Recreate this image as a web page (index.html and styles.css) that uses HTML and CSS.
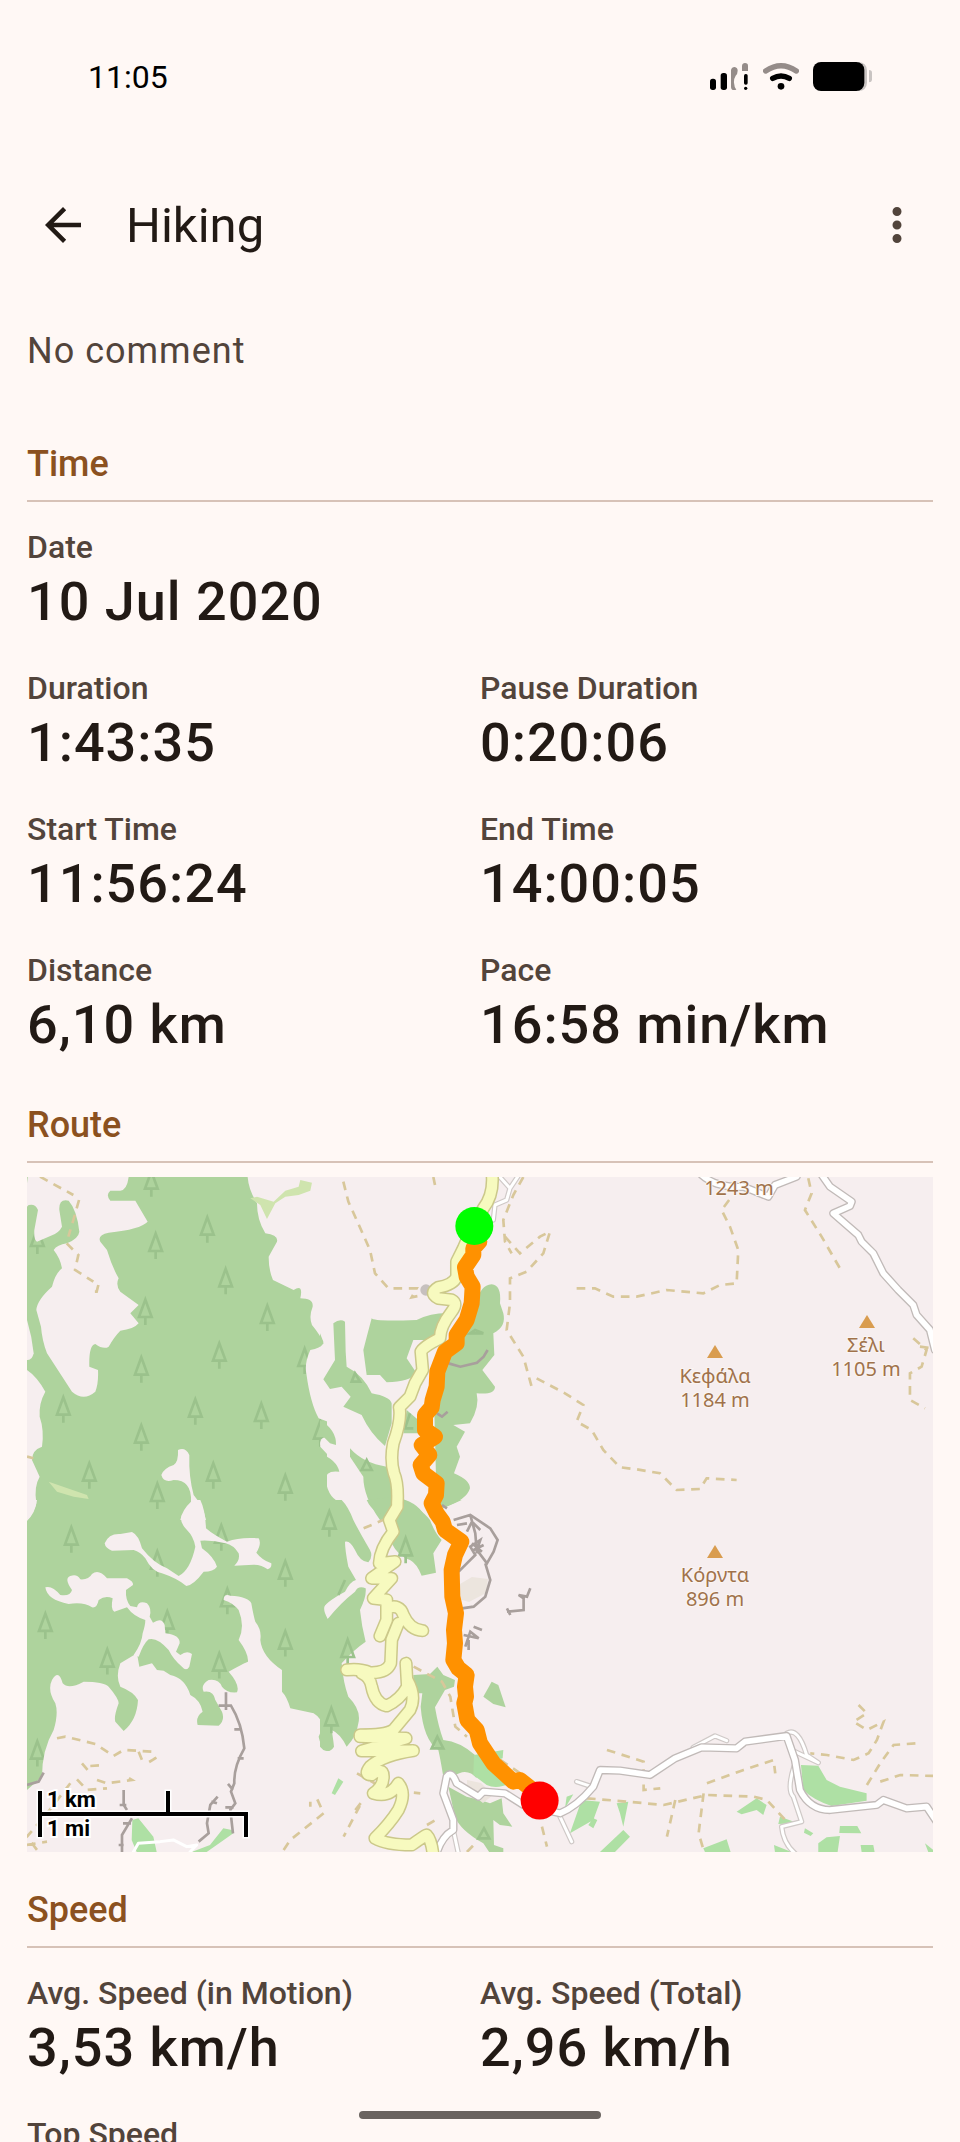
FILE: index.html
```html
<!DOCTYPE html>
<html lang="en">
<head>
    <meta charset="UTF-8">
    <meta name="viewport" content="width=device-width, initial-scale=1.0">
    <title>Hiking</title>
    <link rel="stylesheet" href="styles.css">
</head>
<body>

<div class="status-bar">
    <span>11:05</span>
    <div class="status-icons">
        <svg width="39" height="29" viewBox="213 96 117 87">
            <rect x="213" y="146" width="18" height="34" rx="8"/>
            <rect x="245" y="129" width="19" height="51" rx="8"/>
            <path class="dim" d="M276 120Q278 111 287 111Q296 113 296 122Q296 131 290 137Q284 147 285 158Q286 172 292 179Q276 184 276 170z"/>
            <path class="dim" d="M309 123V107Q310 99 318 99Q327 99 327 107V123z"/>
            <rect x="315" y="132" width="11" height="32" rx="5"/>
            <circle cx="320" cy="175" r="5"/>
        </svg>
        <svg width="36" height="29" viewBox="369 96 108 87">
            <path class="dim-line" d="M377 123Q423 91 469 123"/>
            <path class="line" d="M398 145Q423 131 448 145"/>
            <circle cx="423" cy="169" r="10"/>
        </svg>
        <svg width="59" height="29" viewBox="519 96 177 87">
            <path class="faint" d="M655 96Q681 98 681 122V158Q680 182 655 183z"/>
            <rect x="519" y="96" width="154" height="87" rx="24"/>
            <path class="faint" d="M687 120Q696 121 696 128V150Q695 157 687 157z"/>
        </svg>
    </div>
</div>

<header class="app-bar">
    <button class="icon-button" type="button" aria-label="Back">
        <svg class="back" width="54" height="54" viewBox="0 0 24 24"><path d="M20 11H7.83l5.59-5.59L12 4l-8 8 8 8 1.41-1.41L7.83 13H20z"/></svg>
    </button>
    <h1>Hiking</h1>
    <button class="icon-button" type="button" aria-label="More options">
        <svg width="54" height="54" viewBox="0 0 24 24"><path d="M12 8a2 2 0 1 0 0-4 2 2 0 0 0 0 4zm0 2a2 2 0 1 0 0 4 2 2 0 0 0 0-4zm0 6a2 2 0 1 0 0 4 2 2 0 0 0 0-4z"/></svg>
    </button>
</header>

<main>
    <p class="comment">No comment</p>

    <section>
        <h2>Time</h2>
        <dl class="stats">
            <div class="wide"><dt>Date</dt><dd>10 Jul 2020</dd></div>
            <div><dt>Duration</dt><dd>1:43:35</dd></div>
            <div><dt>Pause Duration</dt><dd>0:20:06</dd></div>
            <div><dt>Start Time</dt><dd>11:56:24</dd></div>
            <div><dt>End Time</dt><dd>14:00:05</dd></div>
            <div><dt>Distance</dt><dd>6,10 km</dd></div>
            <div><dt>Pace</dt><dd>16:58 min/km</dd></div>
        </dl>
    </section>

    <section>
        <h2>Route</h2>
        <svg class="map" viewBox="0 0 906 675">
            <defs>
                <path id="tree" d="M0 4L-19 56H19zM0 56V80"/>
                <path id="peak" d="M0 0L8 13H-8z"/>
                <path id="main-road" d="M515 0Q525 70 490 115L445 200L430 235L410 275V320Q400 345 355 352Q325 370 355 385L395 390Q415 400 395 425Q360 470 360 505Q310 530 303 545L308 600L285 640L270 680L238 712Q245 750 220 820Q210 870 222 910Q235 940 232 1000V1010L208 1050L220 1085Q180 1135 178 1180L225 1175L155 1225L215 1225L160 1285L200 1290V1350L180 1398M200 1315Q240 1300 250 1335Q270 1380 308 1382M235 1360L215 1410L212 1480Q200 1510 150 1508Q120 1495 80 1500M125 1510Q150 1520 155 1550Q165 1600 200 1608Q240 1590 262 1550L258 1480M262 1530Q290 1580 270 1620L220 1680Q200 1695 120 1695M120 1700L258 1705L125 1743L280 1742Q190 1755 150 1790Q130 1815 155 1815Q190 1790 190 1820Q190 1850 160 1870Q210 1885 235 1840Q260 1870 235 1920Q210 1960 165 2005Q200 2025 275 2025Q310 2000 320 1995Q335 2010 340 2060"/>
                <path id="minor-road" d="M350 1060Q365 1010 400 990V960L370 880L380 830Q395 810 410 850L475 890L490 875L555 880L610 915L720 940Q770 920 820 860L840 810L900 812L990 825L1065 775L1145 742L1250 745L1275 725L1400 708L1425 780L1440 870Q1470 930 1530 930L1670 915L1690 900L1760 925L1820 920L1850 965"/>
                <path id="hill-road" d="M595 0L630 50L695 95L690 108L640 130L715 195L725 215L760 250L790 310L835 360L880 405L890 435L930 480L945 540M245 15Q290 55 370 50L445 80L465 45L530 20"/>
                <path id="lanes" d="M1120 742L1185 708L1220 722M1400 700Q1435 680 1460 765L1495 788L1425 755M1422 800Q1400 870 1420 890L1445 965L1385 980Q1390 1030 1425 1060M720 950L755 1025M400 990L415 1060M770 845L815 860"/>
            </defs>

            <rect class="land" width="906" height="675"/>

            <!-- western forest -->
            <rect class="wood" width="300" height="675"/>
            <g class="trees" transform="translate(0 -7) scale(.3333)">
                <use href="#tree" x="373" y="0"/><use href="#tree" x="541" y="138"/><use href="#tree" x="386" y="187"/>
                <use href="#tree" x="596" y="293"/><use href="#tree" x="355" y="385"/><use href="#tree" x="721" y="403"/>
                <use href="#tree" x="577" y="516"/><use href="#tree" x="343" y="558"/><use href="#tree" x="833" y="532"/>
                <use href="#tree" x="109" y="678"/><use href="#tree" x="505" y="684"/><use href="#tree" x="703" y="697"/>
                <use href="#tree" x="343" y="762"/><use href="#tree" x="187" y="876"/><use href="#tree" x="559" y="876"/>
                <use href="#tree" x="391" y="937"/><use href="#tree" x="775" y="912"/><use href="#tree" x="880" y="750"/>
                <use href="#tree" x="31" y="172"/><use href="#tree" x="133" y="1068"/><use href="#tree" x="583" y="1062"/>
                <use href="#tree" x="775" y="1170"/><use href="#tree" x="391" y="1140"/><use href="#tree" x="55" y="1327"/>
                <use href="#tree" x="601" y="1253"/><use href="#tree" x="421" y="1320"/><use href="#tree" x="775" y="1380"/>
                <use href="#tree" x="241" y="1434"/><use href="#tree" x="577" y="1446"/><use href="#tree" x="31" y="1710"/>
            </g>
            <g class="land" transform="translate(0 -7) scale(.3333)">
                <path d="M5 0H305V21Q300 60 280 62H250Q235 75 250 92H325L362 155Q340 178 245 188Q210 195 220 215L240 240Q255 290 275 325Q265 345 280 365L335 405L310 430L335 460Q320 478 280 482Q262 500 245 530Q230 540 205 522Q185 525 187 590L213 600Q215 640 205 665Q170 695 135 665L60 550Q45 510 42 470L28 420Q30 390 75 350Q85 310 105 295Q100 265 80 240Q90 225 120 220Q155 205 157 185Q150 120 125 92Q95 85 97 120L105 170Q95 190 70 198L30 215Q20 210 22 180L33 120Q25 100 5 105L0 110V40z"/>
                <path d="M0 450Q15 500 20 550Q15 572 0 570z"/>
                <path d="M0 600Q30 620 55 665Q35 700 38 740Q52 780 45 830Q15 840 15 870L38 920Q20 950 28 1000Q20 1030 0 1052z"/>
                <path d="M662 0V21Q665 60 690 100Q690 150 715 190Q755 195 750 215L725 260Q725 300 738 330L800 360Q830 340 820 385Q860 385 857 410Q845 440 855 465Q880 495 890 520Q880 535 850 540Q832 580 838 610Q850 700 875 745L903 755V0z"/>
                <path d="M453 840Q475 830 487 855Q485 920 500 975Q530 1010 537 1050L460 1050Q465 1020 492 995Q495 930 440 930Q410 940 403 915Q410 895 440 885Q455 875 453 840z"/>
                <path d="M903 800Q875 800 880 830L903 855z"/>
            </g>
            <g class="land" transform="translate(0 323) scale(.3333)">
                <path d="M0 870L45 830Q45 750 80 690Q95 640 85 610Q60 570 75 540Q95 505 107 550Q125 570 170 545Q230 545 245 560Q275 595 275 610Q260 650 265 665L290 693Q330 660 333 600Q320 575 280 560Q265 530 280 490L330 460L337 500L375 490L390 510L410 512L430 525Q475 535 490 585Q520 600 527 635Q505 650 512 675L575 677Q595 660 585 635L565 600Q560 570 530 575Q520 555 545 540Q575 535 585 560Q600 580 630 577Q640 555 605 515Q640 495 663 485Q665 460 635 420Q655 380 635 330Q620 310 590 300Q590 280 610 287Q665 290 673 310Q680 350 685 365Q705 390 700 420Q705 470 765 510V575Q780 590 790 625L860 640Q900 665 875 710Q880 740 903 755V1060H0z"/>
                <path d="M55 262Q75 255 100 285Q130 290 135 270Q110 235 130 228Q150 220 160 238Q185 240 195 222Q215 205 240 235H300Q320 245 318 255L297 270Q295 300 310 318L330 322Q335 300 360 310Q375 325 368 350L378 368Q405 350 413 375L415 400Q460 405 458 430L447 455L460 465Q480 450 495 462L487 500Q478 515 465 500Q440 480 425 450Q390 410 365 418Q350 430 335 470L320 465Q345 430 347 400Q355 375 355 360Q320 350 300 322L262 335Q250 330 257 295Q235 285 215 300Q210 325 195 322Q170 305 125 312Q60 300 55 262z"/>
                <path d="M233 130Q245 100 280 102L315 96Q335 105 345 145Q380 190 420 205L455 228Q490 210 505 140Q500 110 480 90Q455 65 465 45Q490 25 495 0H520Q535 30 537 85Q560 105 600 125Q640 110 695 115Q705 130 688 158Q705 180 733 190Q735 205 722 208Q700 190 665 195L622 197Q640 180 635 160Q620 135 595 130Q560 120 520 122L525 145Q560 170 570 200Q560 215 530 215Q500 255 478 258Q450 235 405 220Q375 215 355 175Q340 155 320 150L255 152Q235 145 233 130z"/>
                <path d="M0 0H30Q25 40 0 62zM903 305Q880 320 903 358z"/>
            </g>

            <!-- woods in the valley -->
            <g class="wood" transform="translate(293 -7) scale(.3333)">
                <path d="M40 460Q60 445 75 455L77 545L80 590Q130 615 155 670Q210 680 215 700V760L195 828Q150 790 125 735L70 710L92 680L65 650L30 657L10 628L45 570z"/>
                <path d="M155 445Q160 455 290 450Q340 425 400 430L340 510H280L260 565L290 610Q270 635 200 637L180 615H140L130 540L143 490z"/>
                <path d="M470 400Q480 345 515 343Q545 345 540 400L550 430Q560 470 520 490L523 555L487 600L525 650Q525 675 470 670Q480 710 450 760L400 765L435 785L410 830L420 860L402 910Q450 930 450 955Q440 990 375 1010L350 1000L340 600L440 490z"/>
                <path d="M260 720L295 750V790H250z"/>
                <path d="M90 835Q130 880 200 890L240 985Q300 1000 320 1050H180Q130 980 130 920L90 860z"/>
                <path d="M0 750Q50 780 48 825L30 820L0 790z"/>
                <path d="M0 850Q50 870 58 905Q15 900 17 930Q25 990 70 1000L80 1050H0z"/>
                <path d="M0 490L10 515L0 530z"/>
            </g>
            <g class="wood" transform="translate(293 323) scale(.3333)">
                <path d="M0 0H65Q85 20 100 60Q115 90 150 150Q160 170 145 187Q120 185 105 150Q90 120 75 125Q75 150 85 200L108 240Q90 245 75 275Q10 310 7 330Q10 360 25 355Q60 310 105 275Q115 255 137 265Q140 290 120 330Q125 380 137 425Q100 450 65 490Q70 550 85 590Q125 630 115 670Q110 710 80 740Q60 700 35 690Q40 720 42 740Q30 760 10 750L0 740z"/>
                <path d="M140 0Q160 45 215 50L215 130Q235 170 270 180Q290 190 305 227L348 218L340 160L365 120Q345 100 330 60Q300 20 225 -10z"/>
                <path d="M350 0H425L370 25z"/>
                <path d="M280 525L330 522L352 500L370 525L405 540L402 560L375 570L345 622Q355 680 370 720Q420 725 465 765L470 835Q440 800 400 830H370Q360 770 355 750Q310 720 302 620L307 580H280z"/>
                <path d="M490 590L515 545L535 555L557 622L520 612z"/>
                <path d="M385 860L440 890L480 900L510 910L545 895L550 940L577 980L540 975L520 960L522 1035L550 1045V1060H510L490 1030Q420 990 405 950z"/>
            </g>
            <g class="orchard" transform="translate(293 323) scale(.3333)">
                <path d="M462 765L550 750L548 775L530 780L570 850Q530 870 500 855L460 825z"/>
                <path d="M785 900L840 905L820 960L750 1000zM820 955L832 960L820 985L805 975zM740 890L760 883L735 925zM35 880L55 835L70 845L45 885z"/>
                <path d="M840 1056L910 990L930 1010L885 1056zM890 910L925 905L920 930L910 980L900 940z"/>
                <path d="M1443 795L1495 797L1520 840L1560 860L1640 880V902L1535 918Q1480 900 1450 870zM1250 935L1310 895L1340 915L1330 945L1310 930L1265 943z"/>
                <path d="M1150 1045L1220 1018L1232 1056H1155zM1560 978H1612L1624 1000L1558 999zM1520 1012L1560 1008L1553 1056H1495V1030zM1622 1035H1660L1664 1056H1625zM1380 950L1435 970L1375 972zM1362 1035L1415 1056H1365zM1455 985L1480 1000L1472 1008L1452 998zM1815 1030L1840 1050V1056H1825z"/>
                <path d="M-563 960L-545 955L-500 1010L-490 1056H-550L-565 1020zM-385 1056L-330 1035L-290 985L-265 990L-260 1000L-310 1035L-340 1056z"/>
            </g>
            <g class="trees" transform="translate(293 323) scale(.3333)">
                <use href="#tree" x="28" y="30"/><use href="#tree" x="257" y="110"/><use href="#tree" x="83" y="415"/>
                <use href="#tree" x="34" y="620"/><path d="M352 710L335 745H370zM492 985L475 1015H508zM75 240L55 285"/>
                <path d="M105 -380L95 -355H120zM465 -510L450 -500H490zM140 -120L125 -90H155zM270 -260L255 -215H280"/>
            </g>
            <g class="scrub" transform="translate(0 -7) scale(.3333)">
                <path d="M670 85L690 80L740 95L775 62L815 50L820 30L855 38L850 62L815 75L775 80L745 100L720 147L700 105zM65 935L180 975L185 987L140 980L90 965z"/>
            </g>
            <path class="quarry" d="M433 407l12 -7 16 2 -2 14 -17 9 -10 -3zM440 603l14 3 12 12 -10 8 -16 -12z"/>

            <!-- footpaths -->
            <g class="trail" transform="translate(293 -7) scale(.3333)">
                <path d="M70 35L85 95L110 150L150 240L165 310L205 355L290 355L275 382L310 375M340 21L345 45"/>
                <path d="M610 21L580 75L550 150L555 215L575 250M555 200L600 250L660 200L690 185L670 250L620 305L570 325V400L560 480L610 560L635 650M650 625L735 670L790 705L770 755L815 780L850 840L900 892L950 898L1020 910L1070 960L1140 957L1160 925L1250 930M770 355H825L880 380L950 380L1040 360L1150 370L1200 345L1250 340L1255 240L1230 170L1205 120L1235 80"/>
                <path d="M1465 25L1475 70L1455 120L1505 200L1560 295M1780 505L1820 540L1805 590L1770 610V690L1815 715M1800 530L1840 535"/>
                <path d="M-840 20L-740 75M-723 90L-740 150L-755 200M-760 220L-725 255L-735 300L-680 335M-665 345L-670 365L-695 365M-879 860L-860 865"/>
            </g>
            <g class="trail" transform="translate(0 323) scale(.3333)">
                <path d="M90 715L115 710L205 732L260 768L290 750L375 755L385 775L360 790M335 755L345 780M165 790L190 820M190 798L235 795M210 840L240 850L315 840L290 825M150 838L180 870L240 865M130 850L60 940L0 1010L30 1050M770 1050L790 1020L890 940L865 885M850 920V905M0 1035L60 1025"/>
                <path d="M985 930L1005 905L950 1010M990 820L1080 870L1180 880M1010 85L1080 55M1160 500L1245 545L1270 590L1285 680L1320 710M1420 780L1480 820M1545 980L1560 1040M1200 975L1235 955M1320 1056L1345 1030"/>
                <path d="M1680 895L1800 905L1910 915L2040 885L2180 890L2220 900L2275 960M1740 750L1850 785V870L1900 865M1945 900L1920 1010M2030 880L2015 1000L2030 1050M2040 850L2150 810L2240 780L2245 820"/>
                <path d="M2495 615L2520 640L2480 665L2520 690L2570 665L2550 720L2525 760L2480 780L2400 765L2350 760M2520 855L2560 790L2600 735L2670 730M2560 845L2620 825L2720 828"/>
            </g>

            <!-- cliffs and rocks -->
            <g class="cliff" transform="translate(0 323) scale(.3333)">
                <path d="M597 577V630M575 617H612Q645 670 652 745Q620 800 622 850L612 875L625 910L610 930L618 1000M622 688H645M632 775H650M603 852L618 870M595 922H620"/>
                <path d="M290 870V915L300 930M278 915H298M315 955L300 980L285 1005V1056M288 970H312M275 1035H290M572 890L550 915L540 970L545 1000L515 1025M553 905L570 910M0 855L35 845L50 818"/>
                <path d="M1280 60L1330 45L1390 85L1412 120L1400 155L1380 190L1350 150L1360 120L1330 140L1345 165L1310 200L1295 215M1330 45L1345 100L1350 160M1290 75L1320 70M1335 130L1365 155M1340 150L1370 135M1320 95L1335 65L1360 90M1375 190L1390 240L1375 290L1340 320L1305 325M1440 335L1490 330V295L1475 285L1500 290L1510 265M1440 325L1450 345M1315 440L1330 395L1355 415L1310 405M1340 380L1365 390M1325 450V420"/>
                <path d="M1265 -410L1300 -400L1350 -412L1370 -430L1382 -450M1230 -260L1245 -250L1262 -265M1245 15L1260 25"/>
            </g>

            <!-- roads -->
            <g transform="translate(293 323) scale(.3333)">
                <use class="lane-casing" href="#lanes"/><use class="lane-fill" href="#lanes"/>
                <use class="minor-casing" href="#minor-road"/><use class="minor-fill" href="#minor-road"/>
                <path class="lane-fill" d="M-560 1056L-545 1030L-480 1025L-440 1020L-400 1040L-370 1035L-390 1056"/>
            </g>
            <g transform="translate(593 -7) scale(.3333)">
                <use class="minor-casing" href="#hill-road"/><use class="minor-fill" href="#hill-road"/>
            </g>
            <g transform="translate(293 -7) scale(.3333)">
                <path class="lane-casing" d="M530 10L570 55L600 10M570 55L560 90L525 105L520 150"/>
                <path class="lane-fill" d="M530 10L570 55L600 10M570 55L560 90L525 105L520 150"/>
                <circle class="stop" cx="318" cy="360" r="17"/>
                <use class="main-casing" href="#main-road"/><use class="main-fill" href="#main-road"/>
            </g>

            <!-- recorded track -->
            <g transform="translate(293 -7) scale(.3333)">
                <path class="track" d="M478 215L460 235V255L435 292L440 320L458 350L455 400L440 450L410 495V520L375 545L352 605L350 650L338 690L335 712L315 735V780L345 800L305 825L328 855L302 885L310 910L350 940L348 975L335 1000L350 1030L368 1055L375 1080L424 1115L405 1155L395 1200L397 1280L408 1330L402 1380L405 1420L400 1470L415 1495L440 1515L435 1550L438 1580L433 1600L442 1650L470 1680L480 1720L520 1780L580 1835L600 1830L650 1870"/>
                <circle class="start" cx="463" cy="168" r="57"/>
                <circle class="end" cx="659" cy="1892" r="57"/>
            </g>

            <g class="peaks">
                <use href="#peak" x="688" y="168"/>
                <use href="#peak" x="840" y="138"/>
                <use href="#peak" x="688" y="368"/>
                <text x="712" y="18">1243 m</text>
                <text x="688" y="206">Κεφάλα</text>
                <text x="688" y="230">1184 m</text>
                <text x="839" y="175">Σέλι</text>
                <text x="839" y="199">1105 m</text>
                <text x="688" y="405">Κόρντα</text>
                <text x="688" y="429">896 m</text>
            </g>

            <g class="scale">
                <path class="halo" d="M13 616V658M13 637H219V658M141 616V637"/>
                <path d="M13 616V658M13 637H219V658M141 616V637"/>
                <text x="20" y="630">1 km</text>
                <text x="20" y="659">1 mi</text>
            </g>
        </svg>
    </section>

    <section>
        <h2>Speed</h2>
        <dl class="stats">
            <div><dt>Avg. Speed (in Motion)</dt><dd>3,53 km/h</dd></div>
            <div><dt>Avg. Speed (Total)</dt><dd>2,96 km/h</dd></div>
            <div class="wide"><dt>Top Speed</dt></div>
        </dl>
    </section>
</main>

<div class="home-indicator"></div>

</body>
</html>
```
FILE: styles.css
```css
* { box-sizing: border-box; }
body {
    margin: 0;
    height: 100vh;
    overflow: hidden;
    background: #fff8f5;
    color: #221a15;
    font-family: Roboto, "Noto Sans", sans-serif;
}
h1, h2, p, dl, dd { margin: 0; }
svg { display: block; }

.status-bar {
    display: flex;
    align-items: center;
    justify-content: space-between;
    height: 153px;
    padding: 0 88px;
    color: #000;
    font-size: 32px;
}
.status-icons { display: flex; gap: 14px; }
.dim { fill: #958c89; }
.dim-line, .line { fill: none; stroke: #958c89; stroke-width: 16; stroke-linecap: round; }
.line { stroke: #000; }
.faint { fill: #c9c4c2; }

.app-bar { display: flex; align-items: center; height: 144px; padding: 0 9px; }
.app-bar h1 { flex: 1; margin-left: 9px; font-size: 49px; font-weight: 400; }
.icon-button {
    display: flex;
    align-items: center;
    justify-content: center;
    width: 108px;
    height: 108px;
    padding: 0;
    border: none;
    border-radius: 50%;
    background: none;
    cursor: pointer;
}
.icon-button svg { fill: #52443b; }
.icon-button .back { fill: #221a15; }

main { padding: 27px; }
.comment { color: #52443b; font-size: 36px; line-height: 54px; letter-spacing: 1px; }

section { padding-top: 31px; }
.comment + section { padding-top: 59px; }
h2 {
    padding-bottom: 9px;
    border-bottom: 2px solid #d7c2b7;
    color: #8b5120;
    font-size: 36px;
    font-weight: 500;
    line-height: 54px;
}
.stats { display: grid; grid-template-columns: 1fr 1fr; row-gap: 31px; padding: 22px 0 10px; }
.wide { grid-column: 1 / -1; }
dt { color: #52443b; font-size: 32px; font-weight: 500; line-height: 46px; }
dd { font-size: 54px; font-weight: 500; line-height: 64px; letter-spacing: 1px; }

/* map */
.map { width: 100%; height: auto; margin-top: 14px; }
.land { fill: #f6eeef; }
.wood { fill: #aed39d; }
.orchard { fill: #aee0a4; }
.scrub { fill: #cfe4ae; }
.quarry { fill: #ece5de; }
.trees { fill: none; stroke: #9bc28c; stroke-width: 8; }
.trail { fill: none; stroke: #d8c79a; stroke-width: 8; stroke-dasharray: 26 20; }
.cliff { fill: none; stroke: #a89f9c; stroke-width: 8; }
.stop { fill: #c6c0be; }
.lane-casing, .lane-fill, .minor-casing, .minor-fill, .main-casing, .main-fill, .track {
    fill: none;
    stroke-linejoin: round;
    stroke-linecap: round;
}
.lane-casing { stroke: #cfc9c7; stroke-width: 16; }
.lane-fill { stroke: #fff; stroke-width: 9; }
.minor-casing { stroke: #c1bab8; stroke-width: 25; }
.minor-fill { stroke: #fff; stroke-width: 17; }
.main-casing { stroke: #cbc88a; stroke-width: 40; }
.main-fill { stroke: #f7fabf; stroke-width: 31; }
.track { stroke: #ff9100; stroke-width: 48; }
.start { fill: #0f0; }
.end { fill: #f00; }
.peaks { fill: #d99c4f; }
.peaks text {
    fill: #a0724b;
    stroke: #fbf5f2;
    stroke-width: 2px;
    paint-order: stroke;
    font-family: "Noto Sans", sans-serif;
    font-size: 20px;
    text-anchor: middle;
}
.scale path { fill: none; stroke: #000; stroke-width: 4; stroke-linecap: square; }
.scale .halo { stroke: #fff; stroke-width: 7; }
.scale text {
    fill: #000;
    stroke: #fff;
    stroke-width: 4px;
    paint-order: stroke;
    font-size: 22px;
    font-weight: 700;
}

.home-indicator {
    position: fixed;
    bottom: 23px;
    left: 50%;
    width: 242px;
    height: 8px;
    margin-left: -121px;
    border-radius: 4px;
    background: #6a635f;
}
```
